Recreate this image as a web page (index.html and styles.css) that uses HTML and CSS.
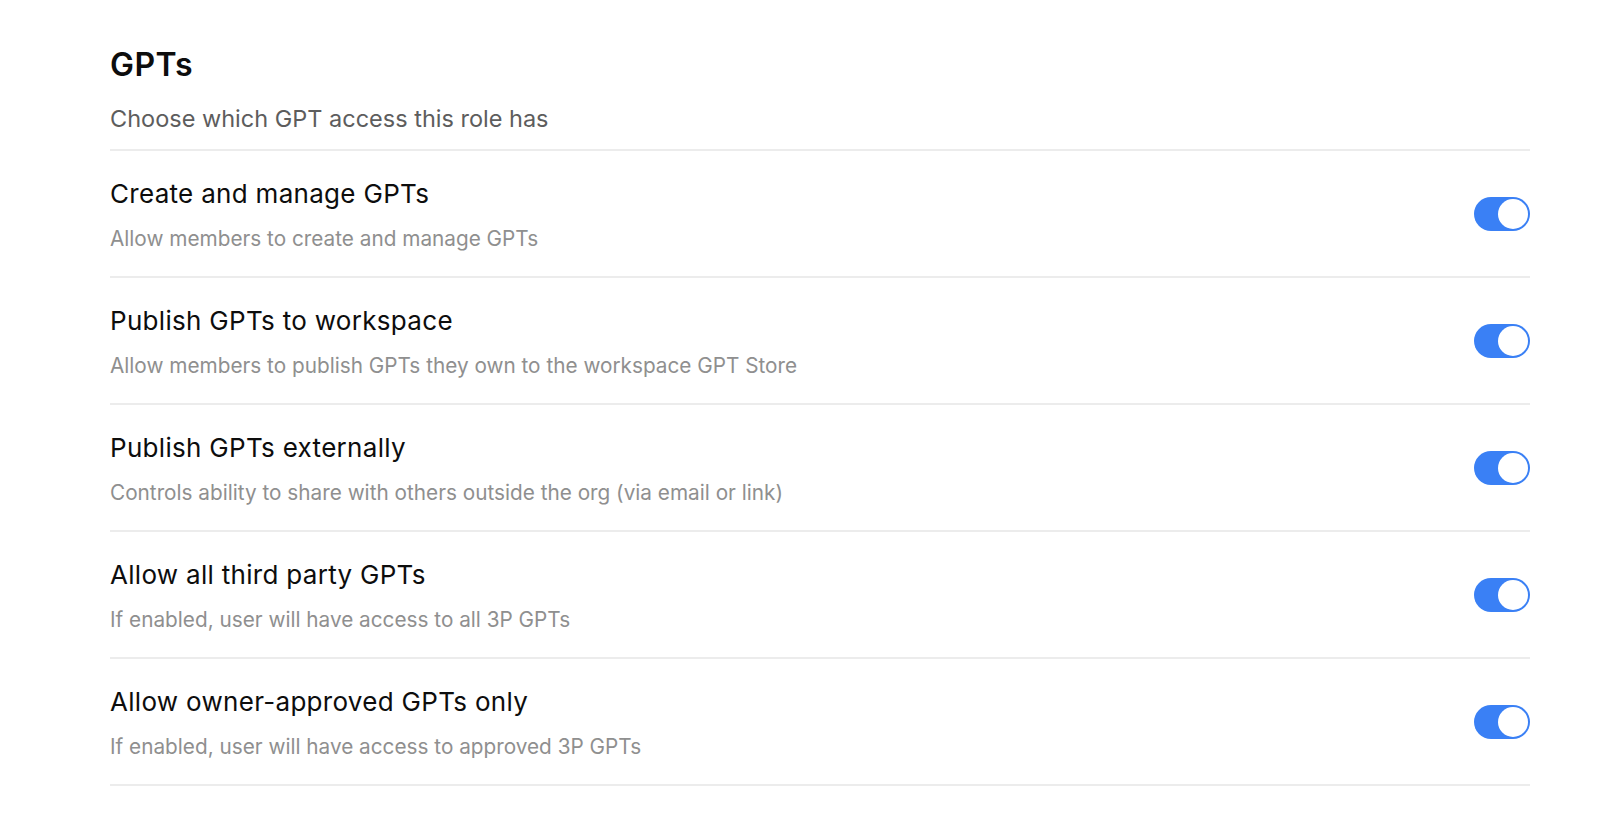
FILE: index.html
```html
<!DOCTYPE html>
<html lang="en">
<head>
<meta charset="utf-8">
<title>GPTs</title>
<link rel="stylesheet" href="styles.css">
</head>
<body>
<main class="page">
  <header class="section-head">
    <h1 class="section-title">GPTs</h1>
    <p class="section-sub">Choose which GPT access this role has</p>
  </header>
  <ul class="settings">
    <li class="setting">
      <div class="setting-text">
        <div class="setting-title">Create and manage GPTs</div>
        <div class="setting-desc">Allow members to create and manage GPTs</div>
      </div>
      <button class="toggle is-on" type="button" aria-pressed="true"><span class="knob"></span></button>
    </li>
    <li class="setting">
      <div class="setting-text">
        <div class="setting-title">Publish GPTs to workspace</div>
        <div class="setting-desc">Allow members to publish GPTs they own to the workspace GPT Store</div>
      </div>
      <button class="toggle is-on" type="button" aria-pressed="true"><span class="knob"></span></button>
    </li>
    <li class="setting">
      <div class="setting-text">
        <div class="setting-title">Publish GPTs externally</div>
        <div class="setting-desc">Controls ability to share with others outside the org (via email or link)</div>
      </div>
      <button class="toggle is-on" type="button" aria-pressed="true"><span class="knob"></span></button>
    </li>
    <li class="setting">
      <div class="setting-text">
        <div class="setting-title">Allow all third party GPTs</div>
        <div class="setting-desc">If enabled, user will have access to all 3P GPTs</div>
      </div>
      <button class="toggle is-on" type="button" aria-pressed="true"><span class="knob"></span></button>
    </li>
    <li class="setting">
      <div class="setting-text">
        <div class="setting-title">Allow owner-approved GPTs only</div>
        <div class="setting-desc">If enabled, user will have access to approved 3P GPTs</div>
      </div>
      <button class="toggle is-on" type="button" aria-pressed="true"><span class="knob"></span></button>
    </li>
  </ul>
</main>
</body>
</html>
```

FILE: styles.css
```css
* { box-sizing: border-box; }

html, body {
  margin: 0;
  padding: 0;
  background: #ffffff;
}

body {
  font-family: Inter, "Noto Sans", "Liberation Sans", sans-serif;
  color: #0d0d0d;
}

.page {
  width: 1420px;
  margin-left: 110px;
  padding-top: 45px;
}

.section-head {
  border-bottom: 2px solid #ececec;
  padding-bottom: 14px;
}

.section-title {
  margin: 0;
  font-size: 32px;
  line-height: 40px;
  font-weight: 600;
  letter-spacing: 0.5px;
  color: #0d0d0d;
}

.section-sub {
  margin: 18px 0 0;
  font-size: 23.5px;
  line-height: 32px;
  font-weight: 400;
  color: #5d5d5d;
}

.settings {
  list-style: none;
  margin: 0;
  padding: 0;
}

.setting {
  display: flex;
  align-items: center;
  justify-content: space-between;
  height: 127px;
  padding: 25px 0;
  border-bottom: 2px solid #ececec;
}

.setting-text {
  display: flex;
  flex-direction: column;
  gap: 15px;
  padding-top: 4px;
}

.setting-title {
  font-size: 26px;
  line-height: 32px;
  letter-spacing: 0.3px;
  color: #0d0d0d;
}

.setting-desc {
  font-size: 20.75px;
  line-height: 28px;
  color: #8f8f8f;
}

.toggle {
  position: relative;
  width: 56px;
  height: 34px;
  padding: 0;
  border: none;
  border-radius: 17px;
  background: #3a80f5;
  cursor: pointer;
  flex-shrink: 0;
}

.knob {
  position: absolute;
  top: 2px;
  right: 2px;
  width: 30px;
  height: 30px;
  border-radius: 50%;
  background: #ffffff;
}
```
